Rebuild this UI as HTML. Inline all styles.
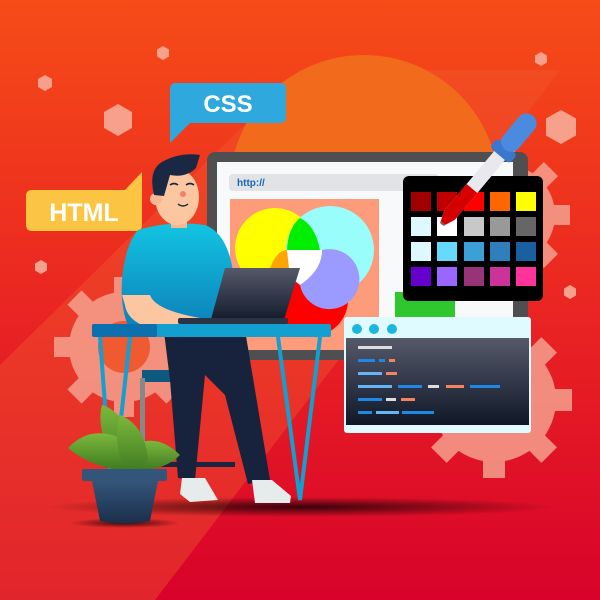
<!DOCTYPE html>
<html><head><style>html,body{margin:0;padding:0}svg{display:block}</style></head><body>
<svg width="600" height="600" viewBox="0 0 600 600" xmlns="http://www.w3.org/2000/svg">
<defs>
<linearGradient id="bg" x1="0" y1="0" x2="0" y2="1"><stop offset="0" stop-color="#f64c17"/><stop offset="0.5" stop-color="#ea2622"/><stop offset="1" stop-color="#d8022a"/></linearGradient>
<linearGradient id="shirt" x1="0" y1="0" x2="0" y2="1"><stop offset="0" stop-color="#12c4e2"/><stop offset="1" stop-color="#0c7fb8"/></linearGradient>
<linearGradient id="dark" x1="0" y1="0" x2="0" y2="1"><stop offset="0" stop-color="#55596a"/><stop offset="1" stop-color="#101828"/></linearGradient>
<linearGradient id="pot" x1="0" y1="0" x2="0" y2="1"><stop offset="0" stop-color="#34557a"/><stop offset="1" stop-color="#1b2e4b"/></linearGradient>
<linearGradient id="leaf" x1="0" y1="0" x2="0" y2="1"><stop offset="0" stop-color="#7cb83c"/><stop offset="1" stop-color="#3f7a22"/></linearGradient>
<radialGradient id="sh"><stop offset="0" stop-color="#000" stop-opacity="0.75"/><stop offset="1" stop-color="#000" stop-opacity="0"/></radialGradient>
</defs>
<rect width="600" height="600" fill="url(#bg)"/>
<polygon points="0,365 300,70 560,70 155,600 0,600" fill="#f05a30" opacity="0.4"/>
<circle cx="364" cy="190" r="135" fill="#f26a1c"/>
<!-- gears -->
<g fill="#f5a08e" opacity="0.85">
<circle cx="124" cy="347" r="55"/><circle cx="494" cy="400" r="62"/><circle cx="505" cy="215" r="50"/>
<g transform="translate(124,347)"><rect x="-10" y="-70" width="20" height="140"/><rect x="-70" y="-10" width="140" height="20"/><rect x="-10" y="-70" width="20" height="140" transform="rotate(45)"/><rect x="-10" y="-70" width="20" height="140" transform="rotate(-45)"/></g>
<g transform="translate(494,400)"><rect x="-11" y="-78" width="22" height="156"/><rect x="-78" y="-11" width="156" height="22"/><rect x="-11" y="-78" width="22" height="156" transform="rotate(45)"/><rect x="-11" y="-78" width="22" height="156" transform="rotate(-45)"/></g>
<g transform="translate(505,215)"><rect x="-10" y="-65" width="20" height="130"/><rect x="-65" y="-10" width="130" height="20"/><rect x="-10" y="-65" width="20" height="130" transform="rotate(45)"/><rect x="-10" y="-65" width="20" height="130" transform="rotate(-45)"/></g>
</g>
<circle cx="124" cy="347" r="26" fill="#f05a30"/>
<!-- hexagons -->
<g fill="#f7a08c">
<polygon points="163,46 169,49.5 169,56.5 163,60 157,56.5 157,49.5"/>
<polygon points="45,75 52,79 52,87 45,91 38,87 38,79"/>
<polygon points="118,104 132,112 132,128 118,136 104,128 104,112"/>
<polygon points="541,52 547,55.5 547,62.5 541,66 535,62.5 535,55.5"/>
<polygon points="561,110 576,118.5 576,135.5 561,144 546,135.5 546,118.5"/>
<polygon points="41,260 47,263.5 47,270.5 41,274 35,270.5 35,263.5"/>
<polygon points="570,285 576,288.5 576,295.5 570,299 564,295.5 564,288.5"/>
</g>
<!-- bubbles -->
<path d="M176 83 H280 Q286 83 286 89 V117 Q286 123 280 123 H190 L170 143 V89 Q170 83 176 83Z" fill="#2fa8de"/>
<text x="228" y="112" font-family="Liberation Sans,sans-serif" font-weight="bold" font-size="24" fill="#fff" text-anchor="middle">CSS</text>
<path d="M32 190 H125 L142 172 V225 Q142 231 136 231 H32 Q26 231 26 225 V196 Q26 190 32 190Z" fill="#fcc443"/>
<text x="84" y="221" font-family="Liberation Sans,sans-serif" font-weight="bold" font-size="25" fill="#fff" text-anchor="middle">HTML</text>
<!-- monitor -->
<rect x="207" y="152" width="321" height="208" rx="8" fill="#4f4e50"/>
<rect x="217" y="162" width="296" height="188" fill="#f7f9fb"/>
<rect x="229" y="174" width="210" height="17" rx="4" fill="#e2e3e6"/>
<text x="237" y="186" font-family="Liberation Sans,sans-serif" font-weight="bold" font-size="10" fill="#1565b8">http://</text>
<rect x="230" y="199" width="149" height="151" fill="#fd9b7a"/>
<circle cx="312" cy="300" r="36" fill="#ff0000"/>
<circle cx="275" cy="248" r="40" fill="#ffff00"/>
<circle cx="330" cy="250" r="44" fill="#99fdfc"/>
<path d="M300 218 Q315 225 320 250 L287 250 Q288 228 300 218Z" fill="#00ee00"/>
<path d="M322 250 A30 30 0 1 1 300 285 Q322 270 322 250Z" fill="#9a9aff"/>
<path d="M287 250 L322 250 Q322 270 300 285 Q285 275 287 250Z" fill="#ffffff"/>
<path d="M270 268 Q277 250 287 250 L290 278 Z" fill="#ffa500"/>
<rect x="395" y="292" width="60" height="28" fill="#2ec82e"/>
<!-- palette -->
<rect x="403" y="176" width="140" height="125" rx="6" fill="#000"/>
<g>
<rect x="411" y="192" width="20" height="19" fill="#a00000"/><rect x="437" y="192" width="20" height="19" fill="#c00000"/><rect x="464" y="192" width="20" height="19" fill="#ff0000"/><rect x="490" y="192" width="20" height="19" fill="#ff6600"/><rect x="516" y="192" width="20" height="19" fill="#ffff00"/>
<rect x="411" y="217" width="20" height="19" fill="#ddf8ff"/><rect x="437" y="217" width="20" height="19" fill="#ffffff"/><rect x="464" y="217" width="20" height="19" fill="#c8c8c8"/><rect x="490" y="217" width="20" height="19" fill="#999"/><rect x="516" y="217" width="20" height="19" fill="#666"/>
<rect x="411" y="242" width="20" height="19" fill="#ddf8ff"/><rect x="437" y="242" width="20" height="19" fill="#66d9ff"/><rect x="464" y="242" width="20" height="19" fill="#3ba0d8"/><rect x="490" y="242" width="20" height="19" fill="#2f7fbf"/><rect x="516" y="242" width="20" height="19" fill="#1a5fa0"/>
<rect x="411" y="267" width="20" height="19" fill="#6600cc"/><rect x="437" y="267" width="20" height="19" fill="#9966ff"/><rect x="464" y="267" width="20" height="19" fill="#993377"/><rect x="490" y="267" width="20" height="19" fill="#cc3399"/><rect x="516" y="267" width="20" height="19" fill="#ff3399"/>
</g>
<!-- dropper -->
<g transform="translate(443,223) rotate(40)">
<rect x="-3" y="-8" width="6" height="10" rx="2" fill="#666"/>
<path d="M-7 -90 H7 V-10 L3 0 H-3 L-7 -10Z" fill="#e8e8ee"/>
<path d="M-7 -45 H7 V-10 L3 0 H-3 L-7 -10Z" fill="#d40000"/>
<rect x="-13" y="-100" width="26" height="12" rx="4" fill="#3a78d0"/>
<rect x="-10" y="-140" width="20" height="44" rx="10" fill="#4a8be0"/>
</g>
<!-- code window -->
<rect x="344" y="317" width="187" height="116" rx="3" fill="#dffbff"/>
<circle cx="357" cy="329" r="5" fill="#1bb7e0"/><circle cx="374" cy="329" r="5" fill="#1bb7e0"/><circle cx="392" cy="329" r="5" fill="#1bb7e0"/>
<rect x="346" y="338" width="183" height="87" fill="url(#dark)"/>
<g>
<rect x="358" y="346" width="34" height="3" fill="#ddd"/>
<rect x="358" y="359" width="17" height="3" fill="#1e88e5"/><rect x="379" y="359" width="6" height="3" fill="#1e88e5"/><rect x="389" y="359" width="6" height="3" fill="#f4845f"/>
<rect x="358" y="372" width="24" height="3" fill="#64b5f6"/><rect x="386" y="372" width="11" height="3" fill="#f4845f"/>
<rect x="358" y="385" width="34" height="3" fill="#64b5f6"/><rect x="398" y="385" width="24" height="3" fill="#1e88e5"/><rect x="428" y="385" width="11" height="3" fill="#ddd"/><rect x="446" y="385" width="18" height="3" fill="#f4845f"/><rect x="470" y="385" width="30" height="3" fill="#1e88e5"/>
<rect x="358" y="398" width="24" height="3" fill="#1e88e5"/><rect x="386" y="398" width="10" height="3" fill="#ddd"/><rect x="401" y="398" width="14" height="3" fill="#f4845f"/>
<rect x="358" y="411" width="14" height="3" fill="#1e88e5"/><rect x="376" y="411" width="23" height="3" fill="#64b5f6"/><rect x="402" y="411" width="32" height="3" fill="#1e88e5"/>
</g>
<!-- shadow -->
<ellipse cx="300" cy="507" rx="255" ry="10" fill="url(#sh)"/>
<ellipse cx="125" cy="523" rx="55" ry="5" fill="url(#sh)"/>
<!-- chair -->
<rect x="142" y="370" width="35" height="12" fill="#0d5a80"/>
<rect x="140" y="378" width="5" height="80" fill="#888"/>
<rect x="160" y="462" width="75" height="5" fill="#1a2540"/>
<!-- person -->
<path d="M160 300 L240 300 L250 360 L270 480 L248 484 L225 395 L205 375 L195 480 L178 478 L170 380 Z" fill="#17223d"/>
<path d="M182 478 L205 478 L218 500 L190 502 L180 494Z" fill="#e6ebec"/>
<path d="M252 480 L272 480 L291 496 L290 503 L255 503Z" fill="#e6ebec"/>
<path d="M138 230 Q170 220 205 225 Q232 235 235 290 L230 330 L130 330 Q120 310 122 280 Q125 245 138 230Z" fill="url(#shirt)"/>
<path d="M122 295 L150 295 Q155 310 200 318 L215 322 L212 330 L160 330 Q128 325 125 305Z" fill="#fcc6a0"/>
<rect x="171" y="208" width="16" height="20" fill="#f6b894"/>
<ellipse cx="177" cy="197" rx="22" ry="28" fill="#fcc6a0"/>
<circle cx="156" cy="199" r="6" fill="#f6b894"/>
<path d="M154 195 Q148 170 162 162 Q180 152 200 155 L196 168 Q186 178 170 175 L164 196Z" fill="#1b2844"/>
<path d="M170 185 q4 -3 8 0 M186 185 q4 -3 8 0" stroke="#1b2844" stroke-width="1.6" fill="none"/>
<circle cx="183" cy="194" r="3" fill="#f08070"/>
<path d="M178 204 q5 4 10 0" stroke="#1b2844" stroke-width="1.4" fill="none"/>
<!-- laptop -->
<path d="M225 268 L300 268 L283 323 L210 323Z" fill="url(#dark)"/>
<rect x="178" y="318" width="110" height="6" rx="2" fill="#2b3347"/>
<!-- desk -->
<rect x="92" y="324" width="239" height="13" rx="2" fill="#139fd0"/>
<rect x="92" y="324" width="65" height="13" rx="2" fill="#0c6fae"/>
<g stroke="#139fd0" stroke-width="4" fill="none">
<path d="M100 337 L112 500 L130 337"/>
<path d="M278 337 L300 500 L320 337"/>
</g>
<!-- plant -->
<g fill="url(#leaf)">
<path d="M118 470 Q95 430 102 405 Q120 410 135 440 Q138 460 130 472Z"/>
<path d="M68 448 Q90 425 120 438 Q128 458 118 470 Q88 465 68 448Z"/>
<path d="M180 455 Q160 435 138 443 Q128 458 140 470 Q165 470 180 455Z"/>
<path d="M125 472 Q112 440 120 415 Q145 425 148 460 L140 472Z"/>
</g>
<rect x="82" y="469" width="85" height="12" rx="2" fill="#34557a"/>
<path d="M92 481 L158 481 L150 521 Q125 526 100 521Z" fill="url(#pot)"/>
</svg>
</body></html>
